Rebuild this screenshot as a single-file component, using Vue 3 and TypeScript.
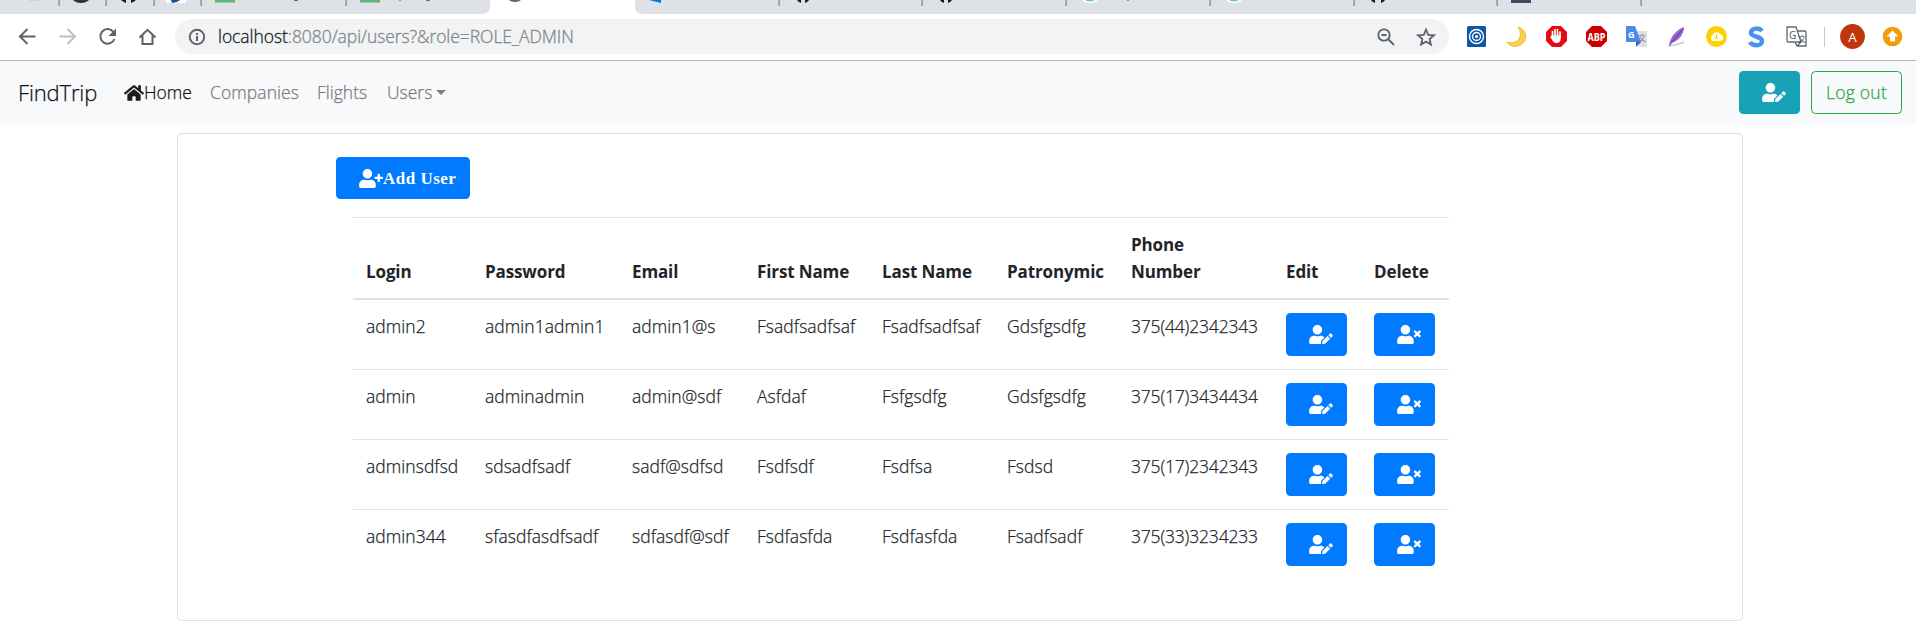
<script setup lang="ts">
import { h, type FunctionalComponent } from 'vue'

interface User {
  login: string
  password: string
  email: string
  first: string
  last: string
  patronymic: string
  phone: string
}

const users: User[] = [
  { login: 'admin2', password: 'admin1admin1', email: 'admin1@s', first: 'Fsadfsadfsaf', last: 'Fsadfsadfsaf', patronymic: 'Gdsfgsdfg', phone: '375(44)2342343' },
  { login: 'admin', password: 'adminadmin', email: 'admin@sdf', first: 'Asfdaf', last: 'Fsfgsdfg', patronymic: 'Gdsfgsdfg', phone: '375(17)3434434' },
  { login: 'adminsdfsd', password: 'sdsadfsadf', email: 'sadf@sdfsd', first: 'Fsdfsdf', last: 'Fsdfsa', patronymic: 'Fsdsd', phone: '375(17)2342343' },
  { login: 'admin344', password: 'sfasdfasdfsadf', email: 'sdfasdf@sdf', first: 'Fsdfasfda', last: 'Fsdfasfda', patronymic: 'Fsadfsadf', phone: '375(33)3234233' },
]

const headings = ['Login', 'Password', 'Email', 'First Name', 'Last Name', 'Patronymic', 'Phone Number', 'Edit', 'Delete']

const paths: Record<string, string> = {
  edit: 'M224 256c70.7 0 128-57.3 128-128S294.700 0 224 0 96 57.300 96 128s57.300 128 128 128zm89.600 32h-16.700c-22.200 10.200-46.900 16-72.900 16s-50.600-5.800-72.900-16h-16.700C60.200 288 0 348.200 0 422.400V464c0 26.500 21.500 48 48 48h274.900c-2.400-6.800-3.400-14-2.600-21.300l6.800-60.900 1.200-11.100 7.900-7.900 77.300-77.300c-24.500-27.700-60-45.500-99.900-45.500zm45.300 145.300l-6.800 61c-1.100 10.200 7.500 18.800 17.600 17.600l60.900-6.800 137.900-137.900-71.700-71.700-137.900 137.800zM633 268.900L595.100 231c-9.300-9.300-24.500-9.300-33.800 0l-37.800 37.800-4.100 4.100 71.800 71.700 41.800-41.800c9.300-9.400 9.300-24.500 0-33.900z',
  add: 'M624 208h-64v-64c0-8.800-7.200-16-16-16h-32c-8.800 0-16 7.200-16 16v64h-64c-8.800 0-16 7.200-16 16v32c0 8.800 7.200 16 16 16h64v64c0 8.800 7.200 16 16 16h32c8.800 0 16-7.200 16-16v-64h64c8.800 0 16-7.200 16-16v-32c0-8.800-7.200-16-16-16zm-400 48c70.700 0 128-57.300 128-128S294.700 0 224 0 96 57.300 96 128s57.300 128 128 128zm89.600 32h-16.700c-22.200 10.200-46.900 16-72.900 16s-50.600-5.800-72.900-16h-16.700C60.200 288 0 348.200 0 422.400V464c0 26.500 21.500 48 48 48h352c26.500 0 48-21.500 48-48v-41.600c0-74.200-60.200-134.400-134.400-134.400z',
  remove: 'M589.600 240l45.600-45.600c6.300-6.300 6.300-16.500 0-22.800l-22.800-22.800c-6.300-6.300-16.500-6.300-22.800 0L544 194.400l-45.600-45.600c-6.300-6.300-16.500-6.300-22.800 0l-22.800 22.800c-6.300 6.300-6.300 16.500 0 22.800l45.600 45.600-45.600 45.600c-6.300 6.300-6.300 16.500 0 22.800l22.800 22.800c6.300 6.300 16.500 6.300 22.800 0l45.600-45.600 45.600 45.600c6.300 6.300 16.500 6.300 22.800 0l22.800-22.800c6.300-6.300 6.300-16.500 0-22.800L589.600 240zM224 256c70.700 0 128-57.300 128-128S294.700 0 224 0 96 57.300 96 128s57.300 128 128 128zm89.600 32h-16.700c-22.200 10.200-46.900 16-72.900 16s-50.600-5.800-72.900-16h-16.700C60.200 288 0 348.200 0 422.400V464c0 26.500 21.500 48 48 48h352c26.500 0 48-21.500 48-48v-41.600c0-74.200-60.200-134.400-134.400-134.400z',
}

const UserIcon: FunctionalComponent<{ name: string }> = (props) =>
  h('svg', { width: 24, height: 19, viewBox: '0 0 640 512', fill: '#fff', 'aria-hidden': 'true' }, [h('path', { d: paths[props.name] })])
UserIcon.props = ['name']

const separators = [59, 106, 154, 201, 346, 779, 922, 1066, 1210, 1354, 1497, 1641]
</script>

<template>
  <div class="window">
    <svg class="tabs" width="1916" height="17" viewBox="0 0 1916 17">
      <rect width="1916" height="17" fill="#dee1e6" />
      <rect y="14" width="1916" height="3" fill="#fff" />
      <path d="M482 14q8 0 8-8V0H635V6q0 8 8 8V17H482z" fill="#fff" />
      <rect v-for="x in separators" :key="x" :x="x - 0.5" width="1.200" height="6" fill="#7d8085" />
      <rect x="29" width="10" height="1" fill="#c5d0ee" />
      <path d="M73 0h16q-3 3-8 3t-8-3z" fill="#333" />
      <path d="M121 0h5v3q-3-1-5-3zM131 0h5q-2 2-5 3z" fill="#1b1b1b" />
      <path d="M166 0h20v3h-20z" fill="#fff" />
      <path d="M171 0h9l-3 2-5 1z" fill="#184f9c" />
      <path d="M215 0h20v2.500h-20zM360 0h20v2.500h-20z" fill="#5fb27a" />
      <path d="M294 0q2 1.500 4 0M400 0v1M426 0q2 1.500 4 0" fill="none" stroke="#555" />
      <path d="M509 0h12q-2 2-6 2t-6-2z" fill="#5f6368" />
      <path d="M649 0h12v3z" fill="#0078d7" />
      <path d="M797 0h4v3q-3-1-4-3zM805 0h4q-1 2-4 3zM940 0h4v3q-3-1-4-3zM948 0h4q-1 2-4 3zM1371 0h4v3q-3-1-4-3zM1381 0h4q-1 2-4 3z" fill="#1b1b1b" />
      <path d="M1082 0h16q-3 3-8 3t-8-3zM1226 0h16q-3 3-8 3t-8-3z" fill="#fff" />
      <path d="M1085 0h10q-5 3-10 0zM1229 0h10q-5 3-10 0z" fill="#79ce91" />
      <path d="M1128 0v1" stroke="#444" />
      <rect x="1511" width="20" height="3" fill="#3c4763" />
    </svg>

    <div class="toolbar">
      <svg class="nav-icons" width="175" height="38" viewBox="0 17 175 38" fill="none" stroke="#5f6368" stroke-width="2">
        <path d="M35.500 36.500H20.500M27.500 29l-7.500 7.500 7.500 7.500" />
        <path d="M59.500 36.500h15M67.500 29l7.500 7.500-7.500 7.500" stroke="#bdbfc2" />
        <path d="M113.500 32A7.300 7.300 0 1 0 114.500 39" />
        <path d="M116 28.500v7.500h-7.500z" fill="#5f6368" stroke="none" />
        <path d="M139.500 37.500l8-7.700 8 7.700M142.500 35.500v8.500h10v-8.500" />
      </svg>
      <div class="omnibox">
        <svg width="18" height="18" viewBox="0 0 18 18" fill="none" stroke="#5f6368" stroke-width="2">
          <circle cx="9" cy="9" r="7.200" /><path d="M9 8v5M9 5v2" />
        </svg>
        <span class="url"><b>localhost</b>:8080/api/users?&amp;role=ROLE_ADMIN</span>
        <svg class="zoom" width="18" height="18" viewBox="0 0 18 18" fill="none" stroke="#5f6368" stroke-width="1.800">
          <circle cx="7" cy="7" r="5.700" /><path d="M11 11l6 6M4.500 7h5" />
        </svg>
        <svg class="star" width="20" height="20" viewBox="0 0 20 20" fill="none" stroke="#5f6368" stroke-width="1.800">
          <path d="M10 2.500l2.200 5.300 5.700.5-4.300 3.700 1.300 5.600-4.900-3-4.900 3 1.300-5.600-4.300-3.700 5.700-.5z" />
        </svg>
      </div>
      <svg class="extensions" width="467" height="38" viewBox="1449 17 467 38">
        <rect x="1467" y="26" width="19" height="21" rx="1.500" fill="#0d57aa" />
        <g fill="none" stroke="#fff" stroke-width="1.400"><circle cx="1476.500" cy="36.500" r="7" /><circle cx="1476.500" cy="36.500" r="4" /></g>
        <circle cx="1476.500" cy="36.500" r="1.500" fill="#fff" />
        <path d="M1518 27c8 2 10 11 5 16-5 5-13 4-16-1 6 2 11 0 13-5 1-4 0-7-2-10z" fill="#fbd04b" stroke="#eeb739" />
        <path d="M1552 26h9l6 6v9l-6 6h-9l-6-6v-9z" fill="#e20c12" />
        <path d="M1552.500 37v-5.500M1555 36v-6.500M1557.500 36v-6.500M1560 37v-5" stroke="#fff" stroke-width="1.700" stroke-linecap="round" />
        <path d="M1551.700 35.500h9.100v3c0 5.500-6.500 5.500-8 2.500l-2.600-4z" fill="#fff" />
        <path d="M1592 26h9l6 6v9l-6 6h-9l-6-6v-9z" fill="#cb0000" />
        <text x="1596.500" y="40.500" text-anchor="middle" textLength="18" lengthAdjust="spacingAndGlyphs" font-size="11" font-weight="700" fill="#fff">ABP</text>
        <path d="M1633 31h14v16h-8z" fill="#dedfe1" />
        <path d="M1626 26h9l6 16h-15z" fill="#4d88ed" /><path d="M1636 42h5l-5 5z" fill="#3261bd" />
        <text x="1628" y="38" font-size="9" font-weight="700" fill="#fff">G</text>
        <text x="1638" y="41" font-size="8" fill="#697985">文</text>
        <path d="M1670 46c5-1 10-2 14-4" stroke="#ccc" stroke-width="1.500" fill="none" />
        <path d="M1669 46c1-9 7-16 15-19 0 7-5 14-13 16z" fill="#9c63cc" />
        <path d="M1669 46l14-17" stroke="#63329b" />
        <circle cx="1716.500" cy="36.500" r="10.500" fill="#ffd000" />
        <path d="M1713 41a3.500 3.500 0 0 1-.5-6 4.500 4.500 0 0 1 8-.5 3.300 3.300 0 0 1 0 6.500z" fill="#fff" />
        <path d="M1716.500 34v5M1714.500 37l2 2 2-2" stroke="#ffd000" fill="none" />
        <path d="M1762 31c-3-4-11-3-11 2 0 4 11 3 11 8 0 6-10 5-12 1" fill="none" stroke="#4b93e8" stroke-width="4.500" />
        <g fill="none" stroke="#5f6b70" stroke-width="1.300">
          <path d="M1787 27h9l5 15h-13q-1 0-1-1zM1798 31h7q1 0 1 1v14h-9l-2-4M1801 42l-4 4" />
        </g>
        <text x="1789" y="39" font-size="10" fill="#48565c">G</text><text x="1798" y="42" font-size="8" fill="#48565c">文</text>
        <rect x="1824" y="27" width="1" height="20" fill="#c5c7c9" />
        <circle cx="1852.500" cy="36.500" r="12.400" fill="#bf360c" />
        <text x="1852.500" y="41.500" text-anchor="middle" font-size="13.500" fill="#fff">A</text>
        <circle cx="1892.500" cy="36.500" r="9.800" fill="#f49b08" />
        <path d="M1892.500 30.500l6 6h-3.500v5h-5v-5h-3.500z" fill="#fff" />
      </svg>
    </div>

    <nav class="navbar">
      <span class="brand">FindTrip</span>
      <a class="home">
        <svg width="20" height="18" viewBox="0 0 576 512" fill="#1c1d1e"><path d="M280 148L96 300v164c0 9 7 16 16 16h112c9 0 16-7 16-16v-96c0-9 7-16 16-16h64c9 0 16 7 16 16v96c0 9 7 16 16 16h112c9 0 16-7 16-16V300L296 148q-8-6-16 0zM571 251l-83-69V44c0-7-5-12-12-12h-56c-7 0-12 5-12 12v72l-89-73q-31-23-61 0L5 251c-6 4-6 12-2 17l26 31c4 5 12 6 17 2L280 107q8-6 16 0l235 194c5 4 13 3 17-2l26-31c4-5 3-13-3-17z" /></svg>
        <span>Home</span>
      </a>
      <a class="companies">Companies</a>
      <a class="flights">Flights</a>
      <a class="users">Users<i class="caret" /></a>
      <button class="btn teal"><UserIcon name="edit" /></button>
      <button class="logout">Log out</button>
    </nav>

    <main class="card">
      <button class="btn add"><UserIcon name="add" /><span>Add User</span></button>
      <table>
        <colgroup>
          <col class="c1"><col class="c2"><col class="c3"><col class="c4"><col class="c4"><col class="c6"><col class="c7"><col class="c8"><col class="c9">
        </colgroup>
        <thead>
          <tr><th v-for="t in headings" :key="t">{{ t }}</th></tr>
        </thead>
        <tbody>
          <tr v-for="u in users" :key="u.login">
            <td>{{ u.login }}</td>
            <td>{{ u.password }}</td>
            <td>{{ u.email }}</td>
            <td>{{ u.first }}</td>
            <td>{{ u.last }}</td>
            <td>{{ u.patronymic }}</td>
            <td class="phone">{{ u.phone }}</td>
            <td><button class="btn"><UserIcon name="edit" /></button></td>
            <td><button class="btn"><UserIcon name="remove" /></button></td>
          </tr>
        </tbody>
      </table>
    </main>
  </div>
</template>

<style>
body { margin: 0; background: #fff; overflow: hidden; }
</style>

<style scoped>
.window { width: 1916px; height: 633px; overflow: hidden; background: #fff; color: #212529; font: 300 17.500px/27px "Open Sans", "Noto Sans", "Noto Sans CJK SC", sans-serif; }
svg { display: block; flex: none; }
.toolbar { display: flex; height: 43px; border-bottom: 1px solid #b3b4b7; box-sizing: content-box; font-weight: 400; }
.omnibox { box-sizing: border-box; width: 1274px; height: 35px; margin-top: 2px; padding: 0 13px 0 13px; border-radius: 18px; background: #f1f3f4; display: flex; align-items: center; }
.url { margin-left: 12px; color: #80868b; font-size: 17.500px; font-weight: 300; letter-spacing: -.06px; white-space: nowrap; -webkit-text-stroke: .3px currentColor; }
.url b { color: #202124; font-weight: 300; }
.zoom { margin-left: auto; }
.star { margin-left: 21px; }
.navbar { box-sizing: border-box; height: 63px; padding: 0 14px 0 18px; background: #f8f9fb; display: flex; align-items: center; color: #7a7b7c; -webkit-text-stroke: .25px currentColor; }
.brand { width: 106px; color: #101112; font-size: 22px; letter-spacing: -.15px; }
.home { width: 86px; display: flex; align-items: center; color: #101112; }
.companies { width: 107px; letter-spacing: .08px; }
.flights { width: 70px; }
.users { display: flex; align-items: center; }
.caret { margin-left: 4px; border: 5.500px solid transparent; border-top-color: #7f8081; border-bottom: 0; }
.btn { box-sizing: border-box; width: 61px; height: 43px; padding: 0 0 0 23px; border: 0; border-radius: 4.500px; background: #007bff; display: flex; align-items: center; color: #fff; }
.teal { margin-left: auto; background: #17a2b8; }
.logout { box-sizing: border-box; width: 91px; height: 43px; margin-left: 11px; padding: 0; border: 1px solid #28a745; border-radius: 4.500px; background: transparent; color: #28a745; font: inherit; letter-spacing: .25px; -webkit-text-stroke: .25px currentColor; }
.card { box-sizing: border-box; width: 1566px; height: 488px; margin: 9px 0 0 177px; padding: 23px 0 0 158px; border: 1px solid #dfdfdf; border-radius: 4.500px; }
.add { width: 134px; height: 42px; font: 700 17px "Liberation Serif", serif; }
.add span { padding-top: 2px; letter-spacing: .5px; }
table { width: 1096px; margin: 18px 0 0 17px; table-layout: fixed; border-collapse: separate; border-spacing: 0; }
.c1 { width: 119px; } .c2 { width: 147px; } .c3 { width: 125px; } .c4 { width: 125px; } .c6 { width: 124px; } .c7 { width: 155px; } .c8 { width: 88px; } .c9 { width: 88px; }
th, td { box-sizing: border-box; padding: 13px 0 0 13px; border-top: 1px solid #dee2e6; text-align: left; white-space: nowrap; }
th { height: 83px; padding: 13px 45px 13px 13px; border-bottom: 2px solid #dee2e6; vertical-align: bottom; white-space: normal; font-size: 17px; font-weight: 700; letter-spacing: -.12px; }
th:not(:nth-child(7)) { padding-right: 0; white-space: nowrap; }
td { height: 70px; vertical-align: top; letter-spacing: .05px; -webkit-text-stroke: .25px currentColor; }
.phone { letter-spacing: -.18px; }
tbody tr:first-child td { height: 69px; border-top: 0; }
</style>
